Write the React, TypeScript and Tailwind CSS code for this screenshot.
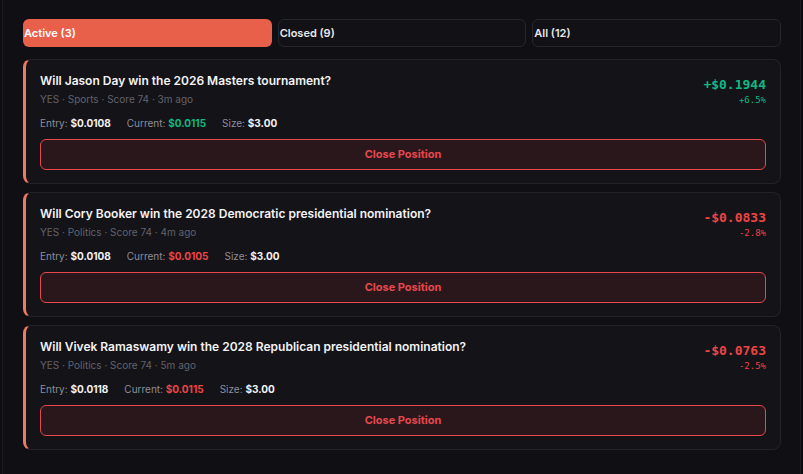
import { useState } from 'react';

type Position = {
  title: string;
  category: string;
  age: string;
  entry: string;
  current: string;
  size: string;
  pnl: string;
  pct: string;
  up: boolean;
};

const positions: Position[] = [
  {
    title: 'Will Jason Day win the 2026 Masters tournament?',
    category: 'Sports',
    age: '3m ago',
    entry: '$0.0108',
    current: '$0.0115',
    size: '$3.00',
    pnl: '+$0.1944',
    pct: '+6.5%',
    up: true,
  },
  {
    title: 'Will Cory Booker win the 2028 Democratic presidential nomination?',
    category: 'Politics',
    age: '4m ago',
    entry: '$0.0108',
    current: '$0.0105',
    size: '$3.00',
    pnl: '-$0.0833',
    pct: '-2.8%',
    up: false,
  },
  {
    title: 'Will Vivek Ramaswamy win the 2028 Republican presidential nomination?',
    category: 'Politics',
    age: '5m ago',
    entry: '$0.0118',
    current: '$0.0115',
    size: '$3.00',
    pnl: '-$0.0763',
    pct: '-2.5%',
    up: false,
  },
];

const tabs = [
  { key: 'active', label: 'Active (3)' },
  { key: 'closed', label: 'Closed (9)' },
  { key: 'all', label: 'All (12)' },
];

const PositionCard = ({ p }: { p: Position }) => {
  const tone = p.up ? 'text-[#10b981]' : 'text-[#ef4444]';
  return (
    <div className="rounded-lg border border-[#23232a] border-l-[3px] border-l-[#ee7a63] bg-[#131318] px-3.5 pt-[13px] pb-[13px]">
      <div className="flex items-start justify-between">
        <div>
          <div className="text-[12px] leading-4 font-semibold text-[#f2f2f4]">{p.title}</div>
          <div className="mt-[3px] text-[10px] leading-[14px] text-[#62626c]">
            YES · {p.category} · Score 74 · {p.age}
          </div>
        </div>
        <div className="text-right font-['DejaVu_Sans_Mono',monospace]">
          <div className={`mt-[4px] text-[13px] leading-4 font-bold ${tone}`}>{p.pnl}</div>
          <div className={`mt-[1px] text-[9px] leading-3 ${tone}`}>{p.pct}</div>
        </div>
      </div>
      <div className="mt-[10px] flex gap-4 text-[10px] leading-[14px] text-[#8e8e98]">
        <span>
          Entry: <b className="font-bold text-[#f2f2f4]">{p.entry}</b>
        </span>
        <span>
          Current: <b className={`font-bold ${tone}`}>{p.current}</b>
        </span>
        <span>
          Size: <b className="font-bold text-[#f2f2f4]">{p.size}</b>
        </span>
      </div>
      <button className="mt-[9px] h-[31px] w-full rounded-md border border-[#e5484d] bg-[#2a171c] text-[11px] font-bold text-[#e5484d]">
        Close Position
      </button>
    </div>
  );
};

const App = () => {
  const [tab, setTab] = useState('active');

  return (
    <div className="min-h-screen bg-[#0e0e12] font-['Inter',sans-serif]">
      <div className="mx-[2px] min-h-screen border-x border-[#1c1c22] bg-[#0f0f14] pl-5 pr-[19px] pt-[19px]">
        {/* Tabs */}
        <div className="grid grid-cols-3 gap-1.5">
          {tabs.map((t) => (
            <button
              key={t.key}
              onClick={() => setTab(t.key)}
              className={
                tab === t.key
                  ? 'h-7 rounded-md bg-[#e9604a] pl-px text-left text-[11px] font-semibold text-white'
                  : 'h-7 rounded-md border border-[#26262d] bg-[#111116] pl-px text-left text-[11px] font-semibold text-[#e8e8ec]'
              }
            >
              {t.label}
            </button>
          ))}
        </div>

        {/* Positions */}
        <div className="mt-3 flex flex-col gap-2">
          {positions.map((p) => (
            <PositionCard key={p.title} p={p} />
          ))}
        </div>
      </div>
    </div>
  );
};

export default App;
